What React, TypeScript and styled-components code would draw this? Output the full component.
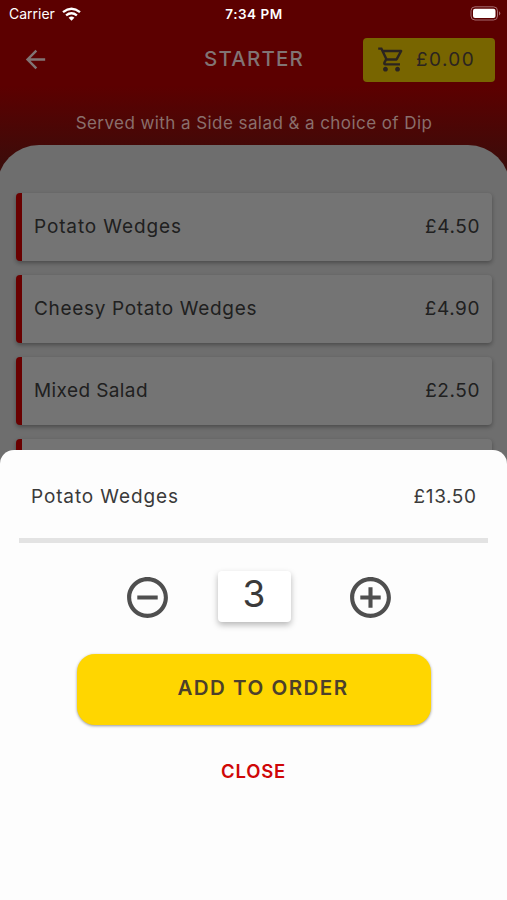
import React from "react";
import styled, { createGlobalStyle } from "styled-components";
import {
  MdAddCircleOutline,
  MdArrowBack,
  MdOutlineShoppingCart,
  MdRemoveCircleOutline,
} from "react-icons/md";

const GlobalStyle = createGlobalStyle`
  * { box-sizing: border-box; }
  body { margin: 0; background: #fdfdfd; font-family: Inter, "Open Sans", sans-serif; }
  button { border: 0; padding: 0; background: none; font: inherit; color: inherit; }
`;

const Screen = styled.div`
  position: relative;
  display: flex;
  flex-direction: column;
  width: 507px;
  height: 900px;
  overflow: hidden;
  background: linear-gradient(#5c0000 0, #5c0000 86px, #3c0c0a 165px);
`;

const StatusBar = styled.header`
  display: grid;
  grid-template-columns: minmax(0, 1fr) auto minmax(0, 1fr);
  align-items: center;
  height: 27px;
  padding: 0 6px 0 9px;
  color: #fff;
  font-size: 14px;
`;

const Carrier = styled.div`
  display: flex;
  align-items: center;
  gap: 7px;
`;

const Clock = styled.div`
  margin-right: 2px;
  font-weight: 600;
  font-size: 13.5px;
  letter-spacing: 0.5px;
`;

const BatteryIcon = styled.svg`
  justify-self: end;
`;

const NavBar = styled.nav`
  display: grid;
  grid-template-columns: minmax(0, 1fr) auto minmax(0, 1fr);
  align-items: center;
  height: 64px;
  padding: 0 12px 0 21px;
`;

const BackButton = styled.button`
  display: flex;
  color: #817474;
`;

const Title = styled.h1`
  margin: 0 8px 2px 0;
  color: #817474;
  font-size: 20.5px;
  font-weight: 500;
  letter-spacing: 1.2px;
`;

const CartButton = styled.button`
  justify-self: end;
  display: flex;
  align-items: center;
  gap: 10px;
  width: 132px;
  height: 44px;
  margin-top: 1px;
  padding-left: 14px;
  border-radius: 4px;
  background: #786500;
  color: #2b2420;
  font-size: 19px;
  letter-spacing: 1.4px;
`;

const Subtitle = styled.p`
  margin: 0;
  height: 54px;
  padding: 20px 0 0 1px;
  text-align: center;
  color: #8a6f6c;
  font-size: 17px;
  line-height: 24px;
  letter-spacing: 0.43px;
`;

const MenuPanel = styled.main`
  flex: 1;
  display: flex;
  flex-direction: column;
  gap: 14px;
  margin: 0 -3px;
  padding: 48px 18px 0 18.5px;
  border-radius: 42px 42px 0 0;
  background: #6e6e6e;
`;

const ItemRow = styled.article`
  flex: none;
  display: flex;
  align-items: center;
  justify-content: space-between;
  height: 68px;
  padding: 0 12.5px 1px 12.5px;
  border-left: 6px solid #690000;
  border-radius: 4px;
  background: #747474;
  box-shadow: 0 2px 4px rgba(0, 0, 0, 0.32);
  color: #202020;
  font-size: 19px;
`;

const ItemName = styled.span<{ $spacing?: number }>`
  letter-spacing: ${(p) => p.$spacing ?? 0.88}px;
`;

const Price = styled.span`
  margin-right: -0.6px;
  letter-spacing: 0.6px;
`;

const Sheet = styled.section`
  position: absolute;
  left: 0;
  right: 0;
  bottom: 0;
  height: 450px;
  display: flex;
  flex-direction: column;
  align-items: center;
  padding: 0 19px;
  border-radius: 14px 14px 0 0;
  background: #fdfdfd;
  color: #3a3a3a;
`;

const SheetHeader = styled.div`
  display: flex;
  align-items: center;
  justify-content: space-between;
  align-self: stretch;
  height: 93px;
  padding: 4px 12px 0;
  border-bottom: 5px solid #e3e3e3;
  font-size: 19px;
`;

const Stepper = styled.div`
  display: flex;
  align-items: center;
  justify-content: space-between;
  width: 272px;
  margin: 28px 0 0 10px;
`;

const StepButton = styled.button`
  display: flex;
  color: #4f4f4f;
`;

const Quantity = styled.output`
  width: 73px;
  height: 51px;
  margin: 0 9px 1px 0;
  border-radius: 4px;
  background: #fff;
  box-shadow: 0 3px 6px rgba(0, 0, 0, 0.28);
  text-align: center;
  color: #3a3a3a;
  font-size: 37px;
  line-height: 46px;
`;

const AddButton = styled.button`
  width: 354px;
  height: 71px;
  margin-top: 31px;
  padding: 0 0 4px 19px;
  border-radius: 18px;
  background: #ffd600;
  box-shadow: 0 1px 3px rgba(0, 0, 0, 0.4);
  color: #4c402b;
  font-size: 20.5px;
  font-weight: 600;
  letter-spacing: 1.5px;
`;

const CloseButton = styled.button`
  margin-top: 34px;
  color: #cf0707;
  font-size: 18.5px;
  line-height: 24px;
  font-weight: 600;
  letter-spacing: 0.8px;
`;

const items = [
  { name: "Potato Wedges", price: "£4.50", spacing: 0.88 },
  { name: "Cheesy Potato Wedges", price: "£4.90", spacing: 0.67 },
  { name: "Mixed Salad", price: "£2.50", spacing: 0.4 },
  { name: "", price: "", spacing: 0 },
];

function Wifi() {
  return (
    <svg width="19" height="14" viewBox="0 0 19 14" fill="none" stroke="#fff" strokeWidth="2.4">
      <path d="M1 5.1Q9.5-1.7 18 5.1" />
      <path d="M4.1 8.4Q9.5 4.1 14.9 8.4" />
      <path d="M6.6 10.7Q9.5 8.4 12.4 10.7L9.5 13.8Z" fill="#fff" stroke="none" />
    </svg>
  );
}

function Battery() {
  return (
    <BatteryIcon width="31" height="15" viewBox="0 0 31 15">
      <rect x="1" y="0.8" width="26.5" height="13.2" rx="4" fill="none" stroke="#a66b70" />
      <rect x="3" y="2.7" width="22.5" height="9.4" rx="2" fill="#fff" />
      <path d="M29 5.2Q31.6 7.4 29 9.6Z" fill="#a66b70" />
    </BatteryIcon>
  );
}

export default function App() {
  return (
    <>
      <GlobalStyle />
      <Screen>
        <StatusBar>
          <Carrier>
            Carrier
            <Wifi />
          </Carrier>
          <Clock>7:34 PM</Clock>
          <Battery />
        </StatusBar>
        <NavBar>
          <BackButton aria-label="Back">
            <MdArrowBack size={29} />
          </BackButton>
          <Title>STARTER</Title>
          <CartButton>
            <MdOutlineShoppingCart size={29} />
            £0.00
          </CartButton>
        </NavBar>
        <Subtitle>Served with a Side salad &amp; a choice of Dip</Subtitle>
        <MenuPanel>
          {items.map((item) => (
            <ItemRow key={item.name}>
              <ItemName $spacing={item.spacing}>{item.name}</ItemName>
              <Price>{item.price}</Price>
            </ItemRow>
          ))}
        </MenuPanel>
        <Sheet>
          <SheetHeader>
            <ItemName>Potato Wedges</ItemName>
            <Price>£13.50</Price>
          </SheetHeader>
          <Stepper>
            <StepButton aria-label="Remove one">
              <MdRemoveCircleOutline size={49} />
            </StepButton>
            <Quantity>3</Quantity>
            <StepButton aria-label="Add one">
              <MdAddCircleOutline size={49} />
            </StepButton>
          </Stepper>
          <AddButton>ADD TO ORDER</AddButton>
          <CloseButton>CLOSE</CloseButton>
        </Sheet>
      </Screen>
    </>
  );
}
